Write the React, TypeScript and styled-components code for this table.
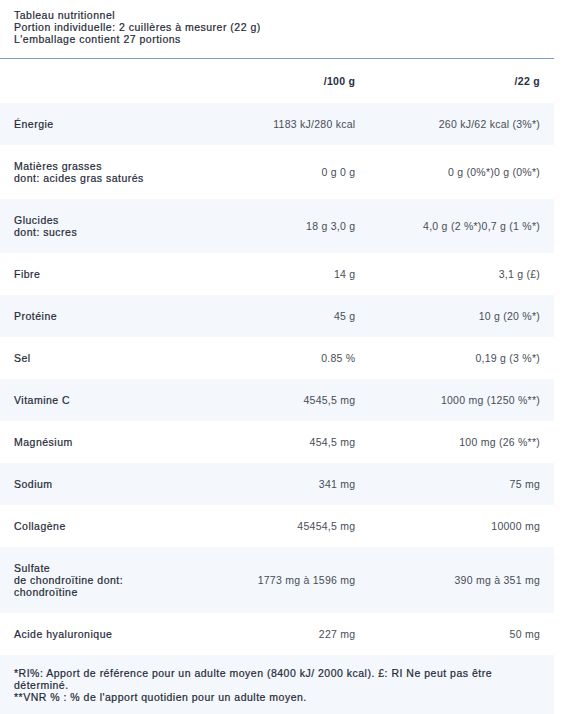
import * as React from "react";
import styled, { createGlobalStyle } from "styled-components";

const GlobalStyle = createGlobalStyle`
  html, body {
    margin: 0;
    padding: 0;
    background: #ffffff;
  }
  body {
    font-family: "Liberation Sans", Arial, sans-serif;
    color: #26303f;
  }
`;

interface Row {
  label: string[];
  per100: string;
  perPortion: string;
}

const rows: Row[] = [
  { label: ["Énergie"], per100: "1183 kJ/280 kcal", perPortion: "260 kJ/62 kcal (3%*)" },
  { label: ["Matières grasses", "dont: acides gras saturés"], per100: "0 g 0 g", perPortion: "0 g (0%*)0 g (0%*)" },
  { label: ["Glucides", "dont: sucres"], per100: "18 g 3,0 g", perPortion: "4,0 g (2 %*)0,7 g (1 %*)" },
  { label: ["Fibre"], per100: "14 g", perPortion: "3,1 g (£)" },
  { label: ["Protéine"], per100: "45 g", perPortion: "10 g (20 %*)" },
  { label: ["Sel"], per100: "0.85 %", perPortion: "0,19 g (3 %*)" },
  { label: ["Vitamine C"], per100: "4545,5 mg", perPortion: "1000 mg (1250 %**)" },
  { label: ["Magnésium"], per100: "454,5 mg", perPortion: "100 mg (26 %**)" },
  { label: ["Sodium"], per100: "341 mg", perPortion: "75 mg" },
  { label: ["Collagène"], per100: "45454,5 mg", perPortion: "10000 mg" },
  {
    label: ["Sulfate", "de chondroïtine dont:", "chondroïtine"],
    per100: "1773 mg à 1596 mg",
    perPortion: "390 mg à 351 mg",
  },
  { label: ["Acide hyaluronique"], per100: "227 mg", perPortion: "50 mg" },
];

const Wrapper = styled.section`
  width: 554px;
`;

const Intro = styled.div`
  padding: 9px 14px 13px;
  font-size: 10.5px;
  line-height: 12px;
  letter-spacing: 0.5px;
  color: #1f2937;
  -webkit-text-stroke: 0.2px #1f2937;
  border-bottom: 1px solid #7c9acb;
`;

const Table = styled.div`
  display: grid;
  grid-template-columns: repeat(3, 1fr);
`;

const RowBox = styled.div<{ $shaded: boolean }>`
  display: contents;

  & > * {
    background: ${(p) => (p.$shaded ? "#f4f7fb" : "#ffffff")};
  }
`;

const Cell = styled.div<{ $align?: "left" | "right"; $strong?: boolean }>`
  display: flex;
  align-items: center;
  justify-content: ${(p) => (p.$align === "right" ? "flex-end" : "flex-start")};
  text-align: ${(p) => p.$align ?? "left"};
  padding: 15px 14px;
  font-size: 10.5px;
  line-height: 12px;
  letter-spacing: ${(p) => (p.$strong ? "0.5px" : "0.25px")};
  color: ${(p) => (p.$strong ? "#1f2937" : "#474d57")};
  -webkit-text-stroke: ${(p) => (p.$strong ? "0.2px #1f2937" : "0")};
`;

const HeadCell = styled(Cell)`
  padding-top: 16px;
  padding-bottom: 16px;
  font-weight: 700;
  letter-spacing: 0.3px;
  color: #26303f;
  -webkit-text-stroke: 0;
`;

const Footnote = styled.div`
  background: #f4f7fb;
  padding: 12px 14px 14px;
  font-size: 10.5px;
  line-height: 12px;
  letter-spacing: 0.5px;
  color: #1f2937;
  -webkit-text-stroke: 0.2px #1f2937;
`;

function App() {
  return (
    <Wrapper>
      <GlobalStyle />
      <Intro>
        Tableau nutritionnel
        <br />
        Portion individuelle: 2 cuillères à mesurer (22 g)
        <br />
        L'emballage contient 27 portions
      </Intro>
      <Table>
        <RowBox $shaded={false}>
          <HeadCell />
          <HeadCell $align="right" $strong>
            /100 g
          </HeadCell>
          <HeadCell $align="right" $strong>
            /22 g
          </HeadCell>
        </RowBox>
        {rows.map((row, i) => (
          <RowBox key={row.label[0]} $shaded={i % 2 === 0}>
            <Cell $strong>
              <span>
                {row.label.map((line, j) => (
                  <React.Fragment key={line}>
                    {j > 0 && <br />}
                    {line}
                  </React.Fragment>
                ))}
              </span>
            </Cell>
            <Cell $align="right">{row.per100}</Cell>
            <Cell $align="right">{row.perPortion}</Cell>
          </RowBox>
        ))}
      </Table>
      <Footnote>
        *RI%: Apport de référence pour un adulte moyen (8400 kJ/ 2000 kcal). £: RI Ne peut pas être
        déterminé.
        <br />
        **VNR % : % de l'apport quotidien pour un adulte moyen.
      </Footnote>
    </Wrapper>
  );
}

export default App;
